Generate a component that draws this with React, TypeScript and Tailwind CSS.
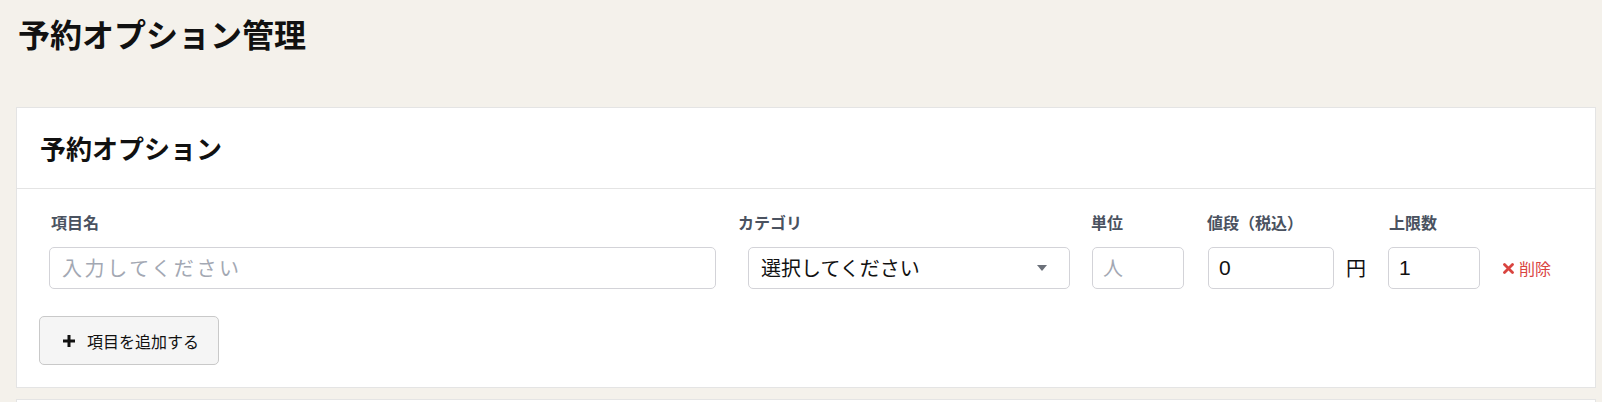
import React from "react";

export default function App() {
  return (
    <div className="min-h-screen bg-[#f4f1eb] pl-4 pr-[6px] font-['Noto_Sans_CJK_JP',sans-serif] text-[#111]">
      <h1 className="pt-[12px] pl-[2px] text-[32px] font-bold leading-[42px] tracking-[0px]">予約オプション管理</h1>
      <div className="mt-[53px] border border-[#e4e4e4] bg-white">
        <div className="flex h-[81px] items-center border-b border-[#e4e4e4] pl-[23px]">
          <h2 className="text-[26px] font-bold leading-none">予約オプション</h2>
        </div>
        <div className="px-[22px] pt-[21px] pb-[22px]">
          <div className="ml-[10px]">
            <div className="flex text-[16px] font-bold leading-[24px] text-[#4a5260]">
              <div className="w-[689px] pl-[2px]">項目名</div>
              <div className="w-[353px]">カテゴリ</div>
              <div className="w-[116px]">単位</div>
              <div className="w-[182px]">値段（税込）</div>
              <div>上限数</div>
            </div>
            <div className="mt-[13px] flex items-center">
              <div className="flex h-[42px] w-[667px] items-center rounded-[5px] border border-[#d3d3d8] pl-[12px] text-[20px] tracking-[2.6px] text-[#a3a8b3]">
                入力してください
              </div>
              <div className="ml-[32px] flex h-[42px] w-[322px] items-center justify-between rounded-[5px] border border-[#d3d3d8] pl-[12px] pr-[22px] text-[20px] text-[#111]">
                <span>選択してください</span>
                <svg width="10" height="6" viewBox="0 0 10 6">
                  <path d="M0 0 H10 L5 6 Z" fill="#6b7079" />
                </svg>
              </div>
              <div className="ml-[22px] flex h-[42px] w-[92px] items-center rounded-[5px] border border-[#d3d3d8] pl-[10px] text-[20px] text-[#a3a8b3]">
                人
              </div>
              <div className="ml-[24px] flex h-[42px] w-[126px] items-center rounded-[5px] border border-[#d3d3d8] pl-[10px] font-['Liberation_Sans',sans-serif] text-[21px] text-[#111]">
                0
              </div>
              <span className="ml-[12px] text-[20px] leading-none text-[#111]">円</span>
              <div className="ml-[22px] flex h-[42px] w-[92px] items-center rounded-[5px] border border-[#d3d3d8] pl-[10px] font-['Liberation_Sans',sans-serif] text-[21px] text-[#111]">
                1
              </div>
              <div className="ml-[23px] flex items-center text-[16px] text-[#d9443f]">
                <svg width="11" height="11" viewBox="0 0 11 11" className="mr-[5px]">
                  <path d="M1.5 1.5 L9.5 9.5 M9.5 1.5 L1.5 9.5" stroke="#d9443f" strokeWidth="2.8" strokeLinecap="round" />
                </svg>
                <span>削除</span>
              </div>
            </div>
          </div>
          <button className="mt-[27px] flex h-[49px] w-[180px] items-center rounded-[5px] border border-[#c9c9c9] bg-[#f5f5f5] pl-[22px] text-[16px] text-[#111]">
            <svg width="14" height="14" viewBox="0 0 14 14" className="mr-[11px]">
              <path d="M7 1 V13 M1 7 H13" stroke="#111" strokeWidth="3" />
            </svg>
            <span>項目を追加する</span>
          </button>
        </div>
      </div>
      <div className="mt-[11px] h-[40px] border border-[#e4e4e4] bg-white" />
    </div>
  );
}
